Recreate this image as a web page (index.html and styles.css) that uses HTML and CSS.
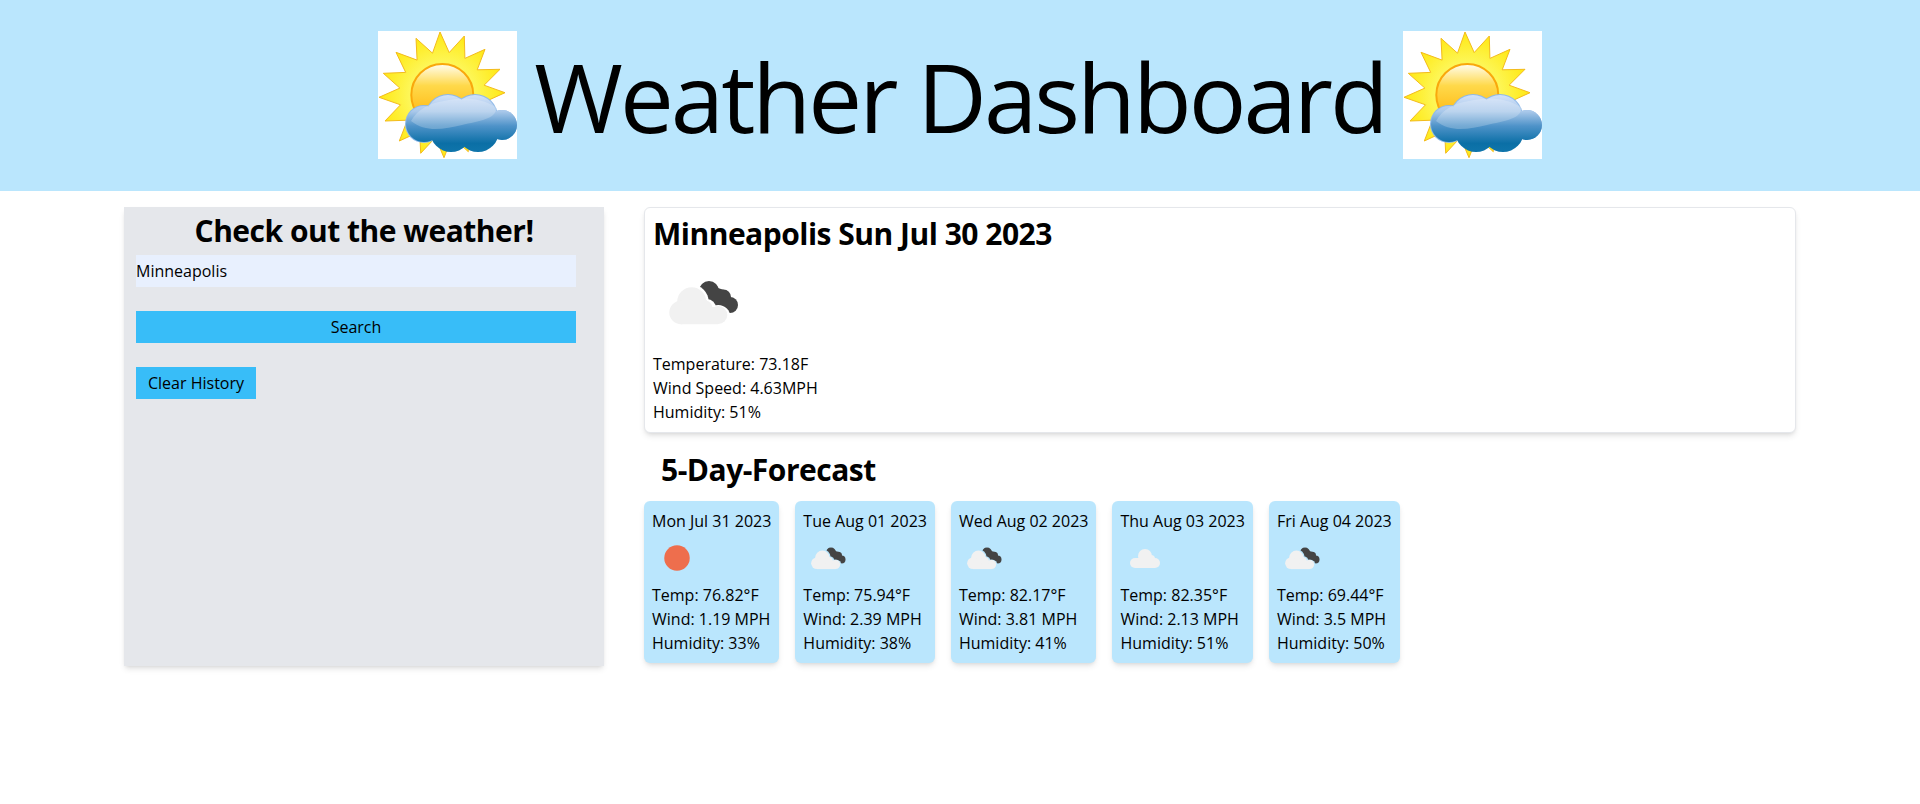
FILE: index.html
```html
<!DOCTYPE html>
<html lang="en">
<head>
<meta charset="utf-8">
<title>Weather Dashboard</title>
<link rel="stylesheet" href="styles.css">
</head>
<body>
<svg class="defs" width="0" height="0" aria-hidden="true">
  <defs>
    <radialGradient id="rayfill" gradientUnits="userSpaceOnUse" cx="64" cy="64" r="63">
      <stop offset="0.5" stop-color="#fdf75a"/>
      <stop offset="1" stop-color="#ffe812"/>
    </radialGradient>
    <linearGradient id="sunfill" x1="0" y1="0" x2="0" y2="1">
      <stop offset="0" stop-color="#fffdf0"/>
      <stop offset="0.35" stop-color="#ffd94a"/>
      <stop offset="1" stop-color="#ffae00"/>
    </linearGradient>
    <linearGradient id="cloudfill" gradientUnits="userSpaceOnUse" x1="0" y1="63" x2="0" y2="121">
      <stop offset="0" stop-color="#d4e3fa"/>
      <stop offset="0.3" stop-color="#a9c8ea"/>
      <stop offset="0.55" stop-color="#4f93c9"/>
      <stop offset="0.85" stop-color="#0b6fa6"/>
      <stop offset="1" stop-color="#0f75ab"/>
    </linearGradient>
    <symbol id="sun-cloud" viewBox="0 0 139 128">
      <rect width="139" height="128" fill="#fff"/>
      <polygon fill="url(#rayfill)" stroke="#f3bb1c" stroke-width="1" points="62,1 71.2,21.6 86.3,5 86.9,27.4 107,18.3 99.2,38.8 122,38.3 106.1,54.2 127,61.7 106.7,70.9 121,85 100.9,86.6 107,105 89.5,98.9 90.3,120.7 74.1,105.8 66,126.7 57.4,106.4 42.7,122.3 41.7,100.6 21.3,110 29.4,89.2 7,90 22.5,73.8 1,66.3 21.9,57.1 5.3,42.3 27.7,41.4 18,21.3 39.1,29.1 38,7.3 54.5,22.2"/>
      <circle cx="64.3" cy="64" r="31" fill="url(#sunfill)" stroke="#f9a80c" stroke-width="2"/>
      <g fill="#8fb9e8">
        <circle cx="46" cy="93" r="19"/><circle cx="70" cy="86" r="23"/><circle cx="97" cy="86" r="23"/><circle cx="124" cy="94" r="15"/>
      </g>
      <g fill="url(#cloudfill)">
        <circle cx="46" cy="93" r="18"/><circle cx="70" cy="86" r="22"/><circle cx="97" cy="86" r="22"/><circle cx="124" cy="94" r="15"/>
        <circle cx="73" cy="100" r="21"/><circle cx="100" cy="100" r="21"/><rect x="46" y="80" width="78" height="26"/>
      </g>
      <path d="M33 90C40 78 52 72 66 70C84 66 100 66 118 76C120 88 100 90 84 94C66 98 48 102 33 90Z" fill="#fff" opacity="0.22"/>
    </symbol>
    <mask id="gap" maskUnits="userSpaceOnUse" x="0" y="0" width="100" height="100">
      <rect width="100" height="100" fill="#fff"/>
      <g fill="#000">
        <circle cx="38.7" cy="49.7" r="17"/><circle cx="54" cy="56" r="9"/><circle cx="65.3" cy="65" r="12"/>
      </g>
    </mask>
    <symbol id="light-cloud" viewBox="0 0 100 100">
      <g fill="#f1f1f1">
        <circle cx="38.7" cy="49.7" r="14.5"/><circle cx="28" cy="60.5" r="11.7"/><circle cx="65.3" cy="63" r="9"/>
        <rect x="28" y="55" width="37" height="17.2"/><rect x="40" y="48" width="14" height="12"/><circle cx="52" cy="56" r="7.5"/>
      </g>
    </symbol>
    <symbol id="broken" viewBox="0 0 100 100">
      <g fill="#444" mask="url(#gap)">
        <circle cx="56" cy="39" r="10"/><circle cx="70.5" cy="45" r="7.5"/><circle cx="77" cy="53" r="8"/>
        <polygon points="50,31 71,38 84,52 72,62 50,45"/>
      </g>
      <use href="#light-cloud" width="100" height="100"/>
    </symbol>
    <symbol id="scattered" viewBox="0 0 100 100">
      <g fill="#f1f1f1">
        <circle cx="50" cy="46" r="14"/><circle cx="30" cy="60" r="10"/><circle cx="70" cy="60" r="10"/>
        <circle cx="62" cy="52" r="8"/><rect x="30" y="50" width="40" height="20"/>
      </g>
    </symbol>
  </defs>
</svg>

<header class="banner">
  <svg class="banner-img" viewBox="0 0 139 128"><use href="#sun-cloud"/></svg>
  <h1 class="banner-title">Weather Dashboard</h1>
  <svg class="banner-img" viewBox="0 0 139 128"><use href="#sun-cloud"/></svg>
</header>

<div class="layout">
  <aside class="search">
    <h2 class="search-title">Check out the weather!</h2>
    <input class="search-input" type="text" value="Minneapolis">
    <button class="btn btn-full">Search</button>
    <button class="btn btn-clear">Clear History</button>
  </aside>

  <main class="content">
    <section class="today">
      <h2 class="today-title">Minneapolis Sun Jul 30 2023</h2>
      <svg class="icon-large" viewBox="0 0 100 100"><use href="#broken"/></svg>
      <p class="line">Temperature: 73.18F</p>
      <p class="line">Wind Speed: 4.63MPH</p>
      <p class="line">Humidity: 51%</p>
    </section>

    <h2 class="forecast-title">5-Day-Forecast</h2>

    <div class="forecast">
      <article class="day">
        <p class="line">Mon Jul 31 2023</p>
        <svg class="icon-small" viewBox="0 0 100 100"><circle cx="50" cy="50" r="25.5" fill="#ee6e4d"/></svg>
        <p class="line">Temp: 76.82°F</p>
        <p class="line">Wind: 1.19 MPH</p>
        <p class="line">Humidity: 33%</p>
      </article>
      <article class="day">
        <p class="line">Tue Aug 01 2023</p>
        <svg class="icon-small" viewBox="0 0 100 100"><use href="#broken"/></svg>
        <p class="line">Temp: 75.94°F</p>
        <p class="line">Wind: 2.39 MPH</p>
        <p class="line">Humidity: 38%</p>
      </article>
      <article class="day">
        <p class="line">Wed Aug 02 2023</p>
        <svg class="icon-small" viewBox="0 0 100 100"><use href="#broken"/></svg>
        <p class="line">Temp: 82.17°F</p>
        <p class="line">Wind: 3.81 MPH</p>
        <p class="line">Humidity: 41%</p>
      </article>
      <article class="day">
        <p class="line">Thu Aug 03 2023</p>
        <svg class="icon-small" viewBox="0 0 100 100"><use href="#scattered"/></svg>
        <p class="line">Temp: 82.35°F</p>
        <p class="line">Wind: 2.13 MPH</p>
        <p class="line">Humidity: 51%</p>
      </article>
      <article class="day">
        <p class="line">Fri Aug 04 2023</p>
        <svg class="icon-small" viewBox="0 0 100 100"><use href="#broken"/></svg>
        <p class="line">Temp: 69.44°F</p>
        <p class="line">Wind: 3.5 MPH</p>
        <p class="line">Humidity: 50%</p>
      </article>
    </div>
  </main>
</div>
</body>
</html>
```
FILE: styles.css
```css
* { box-sizing: border-box; }

html, body { margin: 0; padding: 0; }

body {
  font-family: "Open Sans", "Noto Sans", sans-serif;
  font-size: 16px;
  line-height: 24px;
  color: #000;
  background: #fff;
  min-height: 804px;
}

.defs { position: absolute; }

p, h1, h2 { margin: 0; }

.banner {
  background: #bae6fd;
  height: 191px;
  display: flex;
  justify-content: center;
  align-items: center;
  gap: 17px;
}

.banner-img { width: 139px; height: 128px; display: block; margin-top: -1px; }

.banner-title {
  font-size: 96px;
  line-height: 96px;
  font-weight: 400;
  letter-spacing: -3px;
}

.layout {
  width: 1672px;
  margin: 16px auto 0;
  display: flex;
  gap: 40px;
  align-items: flex-start;
}

.search {
  width: 480px;
  height: 459px;
  flex: none;
  background: #e5e7eb;
  padding: 0 12px;
  display: flex;
  flex-direction: column;
  align-items: flex-start;
  box-shadow: 0 4px 6px -1px rgba(0,0,0,.1), 0 2px 4px -2px rgba(0,0,0,.1);
}

.search-title {
  align-self: stretch;
  text-align: center;
  font-size: 30px;
  line-height: 36px;
  font-weight: 700;
  letter-spacing: -0.5px;
  margin: 6px 0;
}

.search-input {
  width: 440px;
  height: 32px;
  border: 0;
  padding: 0;
  background: #e8f0fe;
  font: inherit;
  color: #000;
  margin-bottom: 24px;
}

.btn {
  height: 32px;
  border: 0;
  padding: 0 12px;
  background: #38bdf8;
  font: inherit;
  color: #000;
  margin-bottom: 24px;
}

.btn-full { width: 440px; }

.content { width: 1152px; flex: none; }

.today {
  background: #fff;
  border: 1px solid #e5e7eb;
  border-radius: 6px;
  padding: 8px;
  box-shadow: 0 4px 6px -1px rgba(0,0,0,.1), 0 2px 4px -2px rgba(0,0,0,.1);
}

.today-title {
  font-size: 30px;
  line-height: 36px;
  font-weight: 700;
  letter-spacing: -0.5px;
}

.icon-large { width: 100px; height: 100px; display: block; }

.icon-small { width: 50px; height: 50px; display: block; }

.forecast-title {
  font-size: 30px;
  line-height: 36px;
  font-weight: 700;
  letter-spacing: -0.5px;
  padding-left: 17px;
  margin: 19px 0 13px;
}

.forecast { display: flex; gap: 16px; }

.day {
  background: #bae6fd;
  border-radius: 6px;
  padding: 8px;
  box-shadow: 0 4px 6px -1px rgba(0,0,0,.1), 0 2px 4px -2px rgba(0,0,0,.1);
  white-space: nowrap;
}
```
